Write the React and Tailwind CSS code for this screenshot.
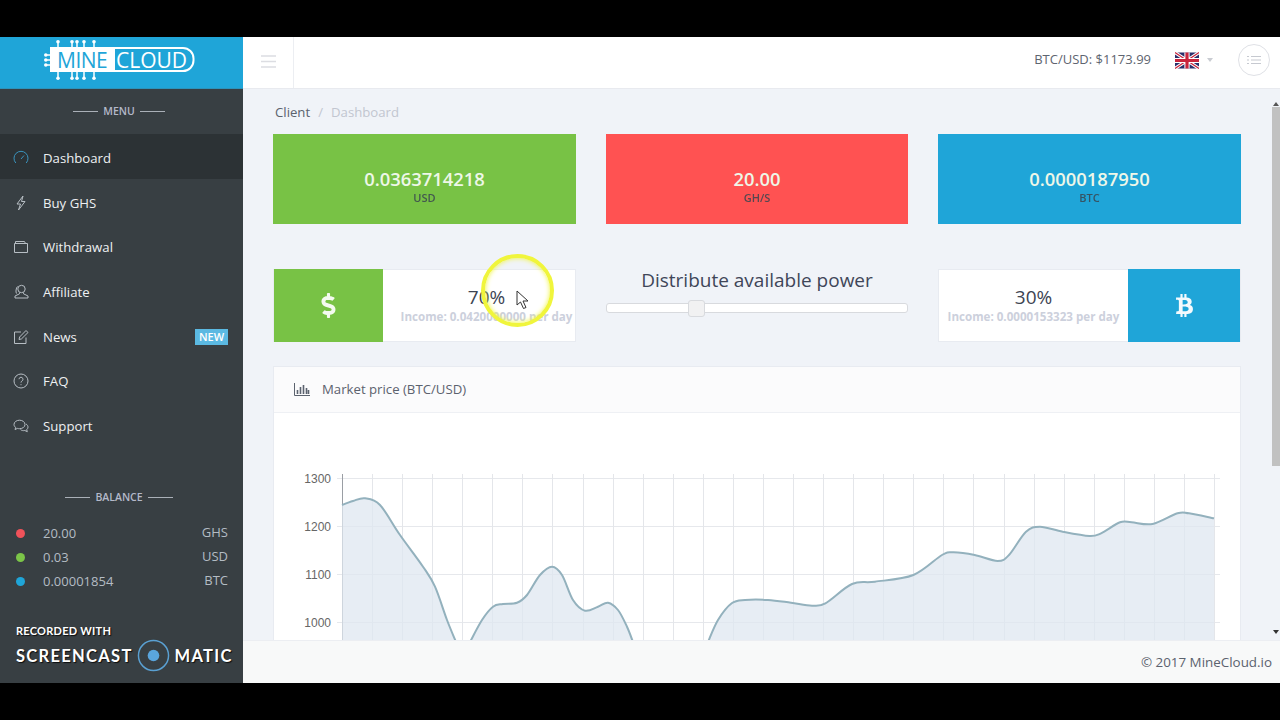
import React from 'react';
import { FaBtc, FaDollarSign } from 'react-icons/fa';

const FONT = { fontFamily: '"Open Sans", "Noto Sans", sans-serif' };

const pts1 = [[342,505],[353,501],[365,498.3],[380,505],[400,535],[423,566.7],[435,586.7],[447,620],[456,642]];
const pts2 = [[470,642],[482,620],[493,606.7],[503,604],[517,602.7],[527,595],[540,575],[552,566.7],[562,575],[573,600],[585,610.7],[598,606.7],[608,602.7],[618,610],[627,626.7],[633,642]];
const pts3 = [[708,642],[718,620],[731.7,603.3],[745,600],[768,600],[791,602.7],[812,605.7],[825.4,603.3],[852,584],[875,581.7],[913.4,575],[942,555],[953.6,552.3],[974.7,555],[997.6,561],[1009,555],[1026,531.7],[1040,526.7],[1062.7,531.7],[1089.5,536],[1101,533.3],[1120,522.3],[1131.6,522.3],[1152.6,524],[1177.5,513.3],[1189,513.3],[1214,518.3]];
const OX = 290, OY = 460;
function smooth(p) {
  let d = `M${p[0][0]-OX} ${p[0][1]-OY}`;
  for (let i = 0; i < p.length - 1; i++) {
    const a = p[i-1] || p[i], b = p[i], c = p[i+1], e = p[i+2] || c;
    d += `C${(b[0]+(c[0]-a[0])/6-OX).toFixed(1)} ${(b[1]+(c[1]-a[1])/6-OY).toFixed(1)} ${(c[0]-(e[0]-b[0])/6-OX).toFixed(1)} ${(c[1]-(e[1]-b[1])/6-OY).toFixed(1)} ${(c[0]-OX).toFixed(1)} ${(c[1]-OY).toFixed(1)}`;
  }
  return d;
}
const Area = ({ p }) => {
  const l = smooth(p);
  const f = `${l}L${p[p.length-1][0]-OX} 190L${p[0][0]-OX} 190Z`;
  return (<><path d={f} fill="#dfe7f0" fillOpacity="0.75" /><path d={l} fill="none" stroke="#93b1bd" strokeWidth="2" /></>);
};

function Chart() {
  const vs = Array.from({ length: 30 }, (_, i) => 342 + i * 30.07);
  return (
    <svg width="960" height="190" viewBox="0 0 960 190" className="block">
      {[478.5,526.5,574.5,622.5].map((y, i) => (
        <g key={y}>
          <line x1={337-OX} x2={1220-OX} y1={y-OY} y2={y-OY} stroke="#e6e8ec" />
          <text x={331-OX} y={y-OY+4.5} textAnchor="end" fontSize="12" fill="#666" fontFamily='"Liberation Sans", sans-serif'>{1300 - i*100}</text>
        </g>
      ))}
      {vs.map((x, i) => (
        <line key={i} x1={Math.round(x)+0.5-OX} x2={Math.round(x)+0.5-OX} y1={474-OY} y2="190" stroke={i === 0 ? '#9a9ea4' : '#e4e6ea'} />
      ))}
      <Area p={pts1} /><Area p={pts2} /><Area p={pts3} />
    </svg>
  );
}

function Logo() {
  return (
    <div className="relative w-[151px] h-[40px]">
      <svg width="151" height="40" viewBox="0 0 151 40" className="block">
        <g fill="#fff" stroke="#fff">
          {[14,28,33,40,50].map(x => (
            <g key={x}>
              <line x1={x} x2={x} y1="1" y2="8" strokeWidth="1.5" />
              <line x1={x} x2={x} y1="32" y2="39" strokeWidth="1.5" />
              <circle cx={x} cy="1.8" r="1.8" stroke="none" />
              <circle cx={x} cy="38.2" r="1.8" stroke="none" />
            </g>
          ))}
          {[15,20,25].map(y => (
            <g key={y}>
              <line x1="1" x2="7" y1={y} y2={y} strokeWidth="1.5" />
              <circle cx="1.8" cy={y} r="1.8" stroke="none" />
            </g>
          ))}
        </g>
        <rect x="6" y="7" width="65" height="25" fill="#fff" />
        <path d="M70 8H139a10.5 10.5 0 0 1 10.5 10.5v2a10.5 10.5 0 0 1-10.5 10.5H70Z" fill="#1fa5d8" stroke="#fff" strokeWidth="2" />
      </svg>
      <span className="absolute left-[13px] top-[5px] text-[21px] leading-[30px] text-[#1fa5d8] tracking-[-0.5px]" style={FONT}>MINE</span>
      <span className="absolute left-[72px] top-[5px] text-[21px] leading-[30px] text-white" style={FONT}>CLOUD</span>
    </div>
  );
}

const I = ({ children, className = 'text-[#b7bec4]' }) => (
  <svg width="16" height="16" viewBox="0 0 16 16" fill="none" stroke="currentColor" strokeWidth="1" className={className}>{children}</svg>
);
const icons = {
  gauge: <><path d="M2.8 13A7 7 0 1 1 13.2 13" /><path d="M8 9l3-3.5" /></>,
  bolt: <path d="M10 1L4 9h3.5L5.5 15 12 6.5H8.5L10 1Z" />,
  folder: <><path d="M1.5 4.5h13v9h-13z" /><path d="M2.5 4.5V2.5h9l1 2" /></>,
  user: <><circle cx="8.5" cy="5" r="3.7" /><path d="M6.5 8.5v1.3L2 12v2h13v-2l-4.5-2.2V8.5" /><path d="M3.5 9.5C2.5 8 3 4 4.5 2.5" /></>,
  edit: <><path d="M13 8.5V14.5H1.5V3H8" /><path d="M6 10.5l.6-2.5 6.4-6.5 2 2-6.5 6.4z" /></>,
  help: <><circle cx="8" cy="8" r="7" /><path d="M6 6.2a2 2 0 1 1 3 1.8c-.7.4-1 .8-1 1.6" /><path d="M8 11.2v1" /></>,
  chat: <><path d="M1 6.5C1 4 3.5 2.2 6.5 2.2S12 4 12 6.5 9.5 10.7 6.5 10.7c-.8 0-1.4-.1-2-.3L2 11.5l.7-2C1.6 8.7 1 7.7 1 6.5Z" /><path d="M13 6c1.3.8 2 1.9 2 3.1 0 1-.5 1.9-1.3 2.6l.6 2-2.5-1.2c-1.6.4-3.2 0-4.3-.9" /></>,
};

const menu = [
  ['Dashboard', 'gauge', true],
  ['Buy GHS', 'bolt'],
  ['Withdrawal', 'folder'],
  ['Affiliate', 'user'],
  ['News', 'edit', false, true],
  ['FAQ', 'help'],
  ['Support', 'chat'],
];

const Title = ({ children }) => (
  <div className="flex items-center justify-center gap-[5px] text-[10.5px] font-semibold text-[#b4b9c9] leading-none">
    <span className="w-[25px] h-px bg-[#aab0b8]" />
    <span>{children}</span>
    <span className="w-[25px] h-px bg-[#aab0b8]" />
  </div>
);

function Sidebar() {
  return (
    <aside className="relative w-[243px] shrink-0 flex flex-col bg-[#383f43]">
      <div className="h-[52px] shrink-0 bg-[#1fa5d8] pl-[44px] pt-[3px] border-b border-[#2c93bb]"><Logo /></div>
      <div className="h-[45px] shrink-0 flex items-center justify-center pr-[5px]"><Title>MENU</Title></div>
      <nav className="flex flex-col">
        {menu.map(([label, ic, active, badge]) => (
          <div key={label} className={`h-[44.7px] flex items-center pl-[13px] pr-[15px] pt-[3px] text-[13.2px] text-[#eef0f2] ${active ? 'bg-[#2c3235]' : ''}`}>
            <span className="w-[30px] shrink-0 flex"><I className={active ? 'text-[#3a93bd]' : 'text-[#b7bec4]'}>{icons[ic]}</I></span>
            <span className="pt-[2px]">{label}</span>
            {badge && <span className="ml-auto w-[33px] h-[16px] bg-[#5bb9e2] text-white text-[11px] font-semibold leading-[16px] text-center">NEW</span>}
          </div>
        ))}
      </nav>
      <div className="mt-[45px] pr-[5px]"><Title>BALANCE</Title></div>
      <div className="mt-[19px] pl-[16px] pr-[15px] flex flex-col text-[13px] text-[#b4bcc4]">
        {[['20.00','GHS','bg-[#f0525a]'],['0.03','USD','bg-[#7bc548]'],['0.00001854','BTC','bg-[#1fa5d8]']].map(([v,u,c]) => (
          <div key={u} className="h-[24px] flex items-center">
            <span className={`w-[9px] h-[9px] rounded-full ${c}`} />
            <span className="ml-[18px]">{v}</span>
            <span className="ml-auto -mt-[2px]">{u}</span>
          </div>
        ))}
      </div>
      <div className="absolute left-[16px] top-[587px] text-white" style={{ fontFamily: '"Lato", sans-serif', textShadow: '1px 1px 1px rgba(0,0,0,.8)' }}>
        <div className="text-[11px] font-bold leading-[14px] tracking-[0.25px]">RECORDED WITH</div>
        <div className="mt-[1px] flex items-center text-[16.5px] font-bold leading-[32px] tracking-[1.3px]">
          <span>SCREENCAST</span>
          <svg width="33" height="33" viewBox="0 0 34 34" className="ml-[4px] mr-[5px]">
            <circle cx="17" cy="17" r="15.5" fill="none" stroke="#5aa0d2" strokeWidth="1.5" />
            <circle cx="17" cy="17" r="6" fill="#5aa5dd" />
          </svg>
          <span>MATIC</span>
        </div>
      </div>
    </aside>
  );
}

function Header() {
  return (
    <header className="h-[52px] shrink-0 bg-white border-b border-[#e8eaef] flex items-center text-[#5e6570]">
      <div className="w-[51px] h-full border-r border-[#eceef2] flex items-center justify-center pb-[3px] pl-[1px]">
        <svg width="15" height="13" viewBox="0 0 15 13" stroke="#dcdde2" strokeWidth="1.4"><path d="M0 1h15M0 6.5h15M0 12h15" /></svg>
      </div>
      <div className="ml-auto flex items-center pb-[5px]">
        <span className="text-[13px]">BTC/USD: $1173.99</span>
        <svg width="24" height="17" viewBox="0 0 60 40" className="ml-[24px]">
          <rect width="60" height="40" fill="#2a2f6b" />
          <path d="M0 0L60 40M60 0L0 40" stroke="#fff" strokeWidth="8" />
          <path d="M0 0L60 40M60 0L0 40" stroke="#c8243c" strokeWidth="3" />
          <path d="M30 0V40M0 20H60" stroke="#fff" strokeWidth="13" />
          <path d="M30 0V40M0 20H60" stroke="#c8243c" strokeWidth="8" />
        </svg>
        <span className="ml-[8px] w-0 h-0 border-x-[3.5px] border-x-transparent border-t-[4px] border-t-[#c9ccd2]" />
        <div className="ml-[25px] mr-[10px] w-[32px] h-[32px] rounded-full border border-[#dfe1e6] flex items-center justify-center">
          <svg width="14" height="10" viewBox="0 0 14 10" stroke="#c6c9d0" strokeWidth="1"><path d="M4 1.5h10M4 5h10M4 8.5h10M0 1.5h2M0 5h2M0 8.5h2" /></svg>
        </div>
      </div>
    </header>
  );
}

const StatCard = ({ value, unit, color }) => (
  <div className={`h-[90px] ${color} flex flex-col items-center pt-[33px] text-[#eef7e8]`}>
    <div className="text-[18.4px] font-semibold leading-[24px]">{value}</div>
    <div className="text-[11px] font-semibold leading-[13px] text-[#3a4650] opacity-85">{unit}</div>
  </div>
);

const Percent = ({ pct, income, className = '' }) => (
  <div className={`flex-1 min-w-0 flex flex-col items-center pt-[14px] ${className}`}>
    <div className="text-[19px] leading-[26px] text-[#3d4452]">{pct}</div>
    <div className="text-[11.6px] font-bold leading-[14px] text-[#ccd0dc] whitespace-nowrap">{income}</div>
  </div>
);

function Content() {
  return (
    <div className="flex-1 min-w-0 overflow-hidden pl-[30px] pr-[31px]">
      <div className="h-[45px] flex items-center text-[13.2px] pt-[3px] -ml-[1px] pl-[3px]">
        <span className="text-[#5b626e]">Client</span>
        <span className="mx-[8px] text-[#c2c6d0]">/</span>
        <span className="text-[#c2c6d0]">Dashboard</span>
      </div>
      <div className="grid grid-cols-[303px_302px_303px] gap-x-[30px]">
        <StatCard value="0.0363714218" unit="USD" color="bg-[#78c245]" />
        <StatCard value="20.00" unit="GH/S" color="bg-[#ff5252]" />
        <StatCard value="0.0000187950" unit="BTC" color="bg-[#1fa5d8]" />
      </div>
      <div className="mt-[45px] grid grid-cols-[303px_302px_303px] gap-x-[30px]">
        <div className="h-[73px] flex bg-white border border-[#e8ebf1]">
          <div className="w-[109px] -my-px shrink-0 bg-[#78c245] flex items-center justify-center text-[#f4faf0]"><FaDollarSign size={25} /></div>
          <Percent pct="70%" income="Income: 0.0420000000 per day" className="pl-[15px]" />
        </div>
        <div className="flex flex-col items-center -mt-px">
          <div className="text-[19px] leading-[24px] text-[#3f4658]">Distribute available power</div>
          <div className="relative w-full h-[10px] mt-[11px] bg-white border border-[#d8dade] rounded-[3px]">
            <div className="absolute left-[81px] -top-[4px] w-[17px] h-[17px] bg-[#f1f1f2] border border-[#d8dade] rounded-[3px]" />
          </div>
        </div>
        <div className="h-[73px] flex bg-white border border-[#e8ebf1]">
          <Percent pct="30%" income="Income: 0.0000153323 per day" />
          <div className="w-[112px] -my-px shrink-0 bg-[#1fa5d8] flex items-center justify-center text-[#f4fafd]"><FaBtc size={23} /></div>
        </div>
      </div>
      <div className="mt-[24px] bg-white border border-[#e8ebf1] w-[968px] -mr-[2px]">
        <div className="h-[46px] bg-[#fbfbfc] border-b border-[#eef0f4] flex items-center pl-[20px] text-[13.2px] text-[#5b626e]">
          <svg width="16" height="13" viewBox="0 0 16 13" stroke="#5b626e" fill="none" className="mr-[12px]"><path d="M.5 0v12.5H16" /><path d="M3.5 7v4M6.5 4v7M9.5 2v9M12.5 5v6M14.5 7v4" strokeWidth="1.6" /></svg>
          <span className="pt-px">Market price (BTC/USD)</span>
        </div>
        <div className="pl-[16px] pt-[47px]"><Chart /></div>
      </div>
    </div>
  );
}

function Scrollbar() {
  return (
    <div className="w-[8px] shrink-0 flex flex-col items-center pt-[13px] pb-[6px]">
      <span className="w-0 h-0 border-x-[3.5px] border-x-transparent border-b-[4px] border-b-[#555]" />
      <div className="w-full h-[359px] mt-[1px] bg-[#c1c1c1]" />
      <span className="mt-auto w-0 h-0 border-x-[3.5px] border-x-transparent border-t-[4px] border-t-[#333]" />
    </div>
  );
}

export default function App() {
  return (
    <div className="h-screen bg-black pt-[37px] pb-[37px] overflow-hidden" style={FONT}>
      <div className="relative h-full flex">
        <Sidebar />
        <div className="flex-1 min-w-0 flex flex-col bg-[#f0f3f8]">
          <Header />
          <div className="flex-1 min-h-0 flex"><Content /><Scrollbar /></div>
          <footer className="h-[43px] shrink-0 bg-[#f8f9f9] border-t border-[#eceef2] flex items-center justify-end pr-[8px] text-[13.4px] text-[#5b626e]">© 2017 MineCloud.io</footer>
        </div>
        {/* cursor highlight */}
        <div className="absolute left-[481px] top-[217px] w-[73px] h-[73px] rounded-full border-[4px] border-[#f0f53c] shadow-[inset_0_0_5px_#f0f53c] blur-[0.6px]" />
        <svg width="14" height="20" viewBox="0 0 14 20" className="absolute left-[516px] top-[253px]">
          <path d="M1 1V15L4.5 12L7.5 18.5L10 17.5L7 11H12Z" fill="#fff" stroke="#333" strokeWidth="1" />
        </svg>
      </div>
    </div>
  );
}
